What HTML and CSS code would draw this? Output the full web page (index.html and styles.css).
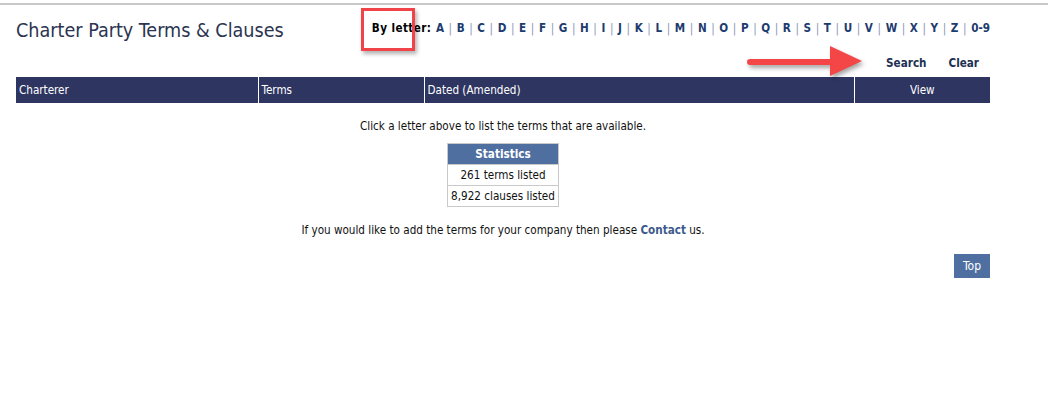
FILE: index.html
```html
<!DOCTYPE html>
<html lang="en">
<head>
  <meta charset="UTF-8">
  <title>Charter Party Terms &amp; Clauses</title>
  <link rel="stylesheet" href="styles.css">
</head>
<body>
  <div class="topline"></div>
  <div class="page">
    <div class="head">
      <h1 class="title">Charter Party Terms &amp; Clauses</h1>
      <div class="letters">
        <b class="by">By letter:</b>
        <a href="#">A</a><i>|</i><a href="#">B</a><i>|</i><a href="#">C</a><i>|</i><a href="#">D</a><i>|</i><a href="#">E</a><i>|</i><a href="#">F</a><i>|</i><a href="#">G</a><i>|</i><a href="#">H</a><i>|</i><a href="#">I</a><i>|</i><a href="#">J</a><i>|</i><a href="#">K</a><i>|</i><a href="#">L</a><i>|</i><a href="#">M</a><i>|</i><a href="#">N</a><i>|</i><a href="#">O</a><i>|</i><a href="#">P</a><i>|</i><a href="#">Q</a><i>|</i><a href="#">R</a><i>|</i><a href="#">S</a><i>|</i><a href="#">T</a><i>|</i><a href="#">U</a><i>|</i><a href="#">V</a><i>|</i><a href="#">W</a><i>|</i><a href="#">X</a><i>|</i><a href="#">Y</a><i>|</i><a href="#">Z</a><i>|</i><a href="#">0-9</a>
      </div>
    </div>
    <div class="tools">
      <a href="#">Search</a>
      <a href="#">Clear</a>
    </div>
    <table class="list">
      <thead>
        <tr>
          <th class="c-charterer">Charterer</th>
          <th class="c-terms">Terms</th>
          <th class="c-dated">Dated (Amended)</th>
          <th class="c-view">View</th>
        </tr>
      </thead>
    </table>
    <p class="hint">Click a letter above to list the terms that are available.</p>
    <table class="stats">
      <tr><th>Statistics</th></tr>
      <tr><td>261 terms listed</td></tr>
      <tr><td>8,922 clauses listed</td></tr>
    </table>
    <p class="hint">If you would like to add the terms for your company then please <a href="#" class="contact">Contact</a> us.</p>
    <div class="bottom"><a href="#" class="top-btn">Top</a></div>
  </div>

  <!-- screenshot annotations -->
  <div class="mark-box"></div>
  <svg class="mark-arrow" width="130" height="40" viewBox="0 0 130 40">
    <path d="M6 16 H86 V3 L118 18 L86 33 V22 H6 A3 3 0 0 1 6 16 Z" fill="#f44547"/>
  </svg>
</body>
</html>
```

FILE: styles.css
```css
* { box-sizing: border-box; }
html, body { margin: 0; padding: 0; }

body {
  background: #fff;
  color: #111;
  font-family: Tahoma, "DejaVu Sans Condensed", "Liberation Sans", sans-serif;
  font-size: 11.6px;
  position: relative;
}

a { text-decoration: none; }

.topline { margin-top: 3px; height: 2px; background: #c8c8c8; margin-right: 1px; }

.page { width: 974px; margin-left: 16px; }

/* Header */
.head { display: flex; justify-content: space-between; align-items: flex-start; }
.title {
  margin: 14px 0 0;
  font-size: 19.6px;
  font-weight: normal;
  color: #2b3450;
}
.letters { margin-top: 16px; font-weight: bold; }
.letters .by { color: #000; margin-right: 1px; letter-spacing: 0.4px; }
.letters a { color: #1d3b6e; }
.letters i { font-style: normal; font-weight: normal; color: #8a96b8; margin: 0 4.6px; }

.tools { display: flex; justify-content: flex-end; gap: 22px; padding-right: 11px; margin-top: 14px; }
.tools a { color: #1d3152; font-weight: bold; }

/* Main table */
.list { width: 100%; border-collapse: collapse; margin-top: 7px; }
.list th {
  background: #2e3561;
  color: #fff;
  font-weight: normal;
  text-align: left;
  height: 26px;
  padding: 0 3px;
  border-left: 1px solid #fff;
}
.list th:first-child { border-left: none; }
.c-charterer { width: 242px; }
.c-terms { width: 166px; }
.c-dated { width: 430px; }
.c-view { text-align: center !important; }

.hint { text-align: center; margin: 16px 0 0; color: #111; }
.contact { color: #3c5a8c; font-weight: bold; }

/* Stats */
.stats { border-collapse: collapse; margin: 10px auto 0; }
.stats th, .stats td { border: 1px solid #c9c9c9; text-align: center; height: 21px; padding: 0 3px; }
.stats th { background: #4f6fa1; color: #fff; border-color: #c9c9c9; }

.bottom { display: flex; justify-content: flex-end; margin-top: 17px; }
.top-btn { background: #4f6fa1; color: #fff; padding: 5px 9px; height: 24px; font-size: 12px; }

/* Annotations */
.mark-box {
  position: absolute;
  left: 361px; top: 8px;
  width: 54px; height: 43px;
  border: 3px solid #f04448;
  box-shadow: 2px 3px 4px rgba(0,0,0,0.3);
}
.mark-arrow {
  position: absolute;
  left: 744px; top: 43px;
  filter: drop-shadow(2px 3px 2px rgba(0,0,0,0.35));
}
```
